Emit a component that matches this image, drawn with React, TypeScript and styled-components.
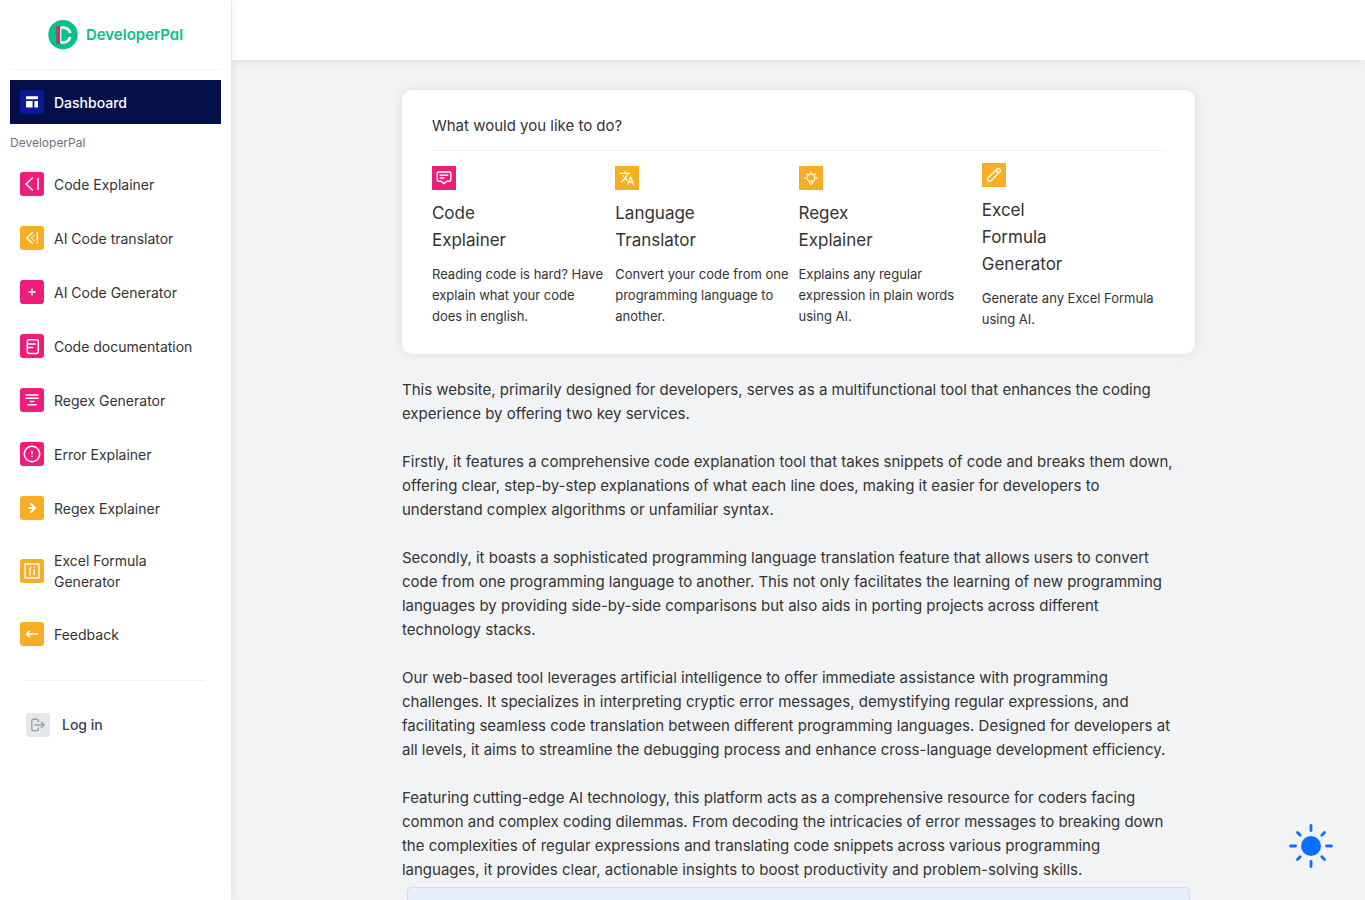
import React from "react";
import styled, { createGlobalStyle } from "styled-components";
import { MdTranslate } from "react-icons/md";

const colors = {
  pink: "#ed1e79",
  amber: "#f7ae24",
  navy: "#040f4a",
  blue: "#0b1a94",
  green: "#06c286",
  text: "#333333",
};

const GlobalStyle = createGlobalStyle`
  * { box-sizing: border-box; }
  body {
    margin: 0;
    background: #f2f3f5;
    color: ${colors.text};
    font-family: Inter, "Liberation Sans", sans-serif;
    font-size: 15px;
    line-height: 24px;
  }
  a { color: inherit; text-decoration: none; }
  h1, h2, p, ul { margin: 0; padding: 0; font-weight: 400; }
`;

const Shell = styled.div`
  display: grid;
  grid-template-columns: 231px minmax(0, 1fr);
  column-gap: 1px;
  height: 100vh;
`;

const Sidebar = styled.aside`
  position: relative;
  z-index: 2;
  padding: 0 10px;
  background: #fff;
  box-shadow: 0 0 10px rgba(0, 0, 0, 0.1);
`;

const Brand = styled.a`
  display: flex;
  align-items: center;
  justify-content: center;
  gap: 8px;
  height: 70px;
  border-bottom: 1px solid #f2f3f4;
  color: ${colors.green};
  font-size: 15px;
  font-weight: 600;
  font-feature-settings: "cv11";
`;

const NavList = styled.ul`
  display: flex;
  flex-direction: column;
  gap: 10px;
  margin-top: 10px;
  list-style: none;
`;

const NavLink = styled.a<{ $active?: boolean }>`
  display: flex;
  align-items: center;
  gap: 10px;
  padding: 10px;
  background: ${(p) => (p.$active ? colors.navy : "transparent")};
  color: ${(p) => (p.$active ? "#fff" : colors.text)};
  font-size: 14px;
  font-weight: ${(p) => (p.$active ? 500 : 400)};
  line-height: 21px;
`;

const NavLabel = styled.li`
  color: #6b7280;
  font-size: 12px;
  line-height: 18px;
`;

const IconTile = styled.span<{ $bg: string; $radius?: number; $color?: string }>`
  display: flex;
  flex: none;
  align-items: center;
  justify-content: center;
  width: 24px;
  height: 24px;
  border-radius: ${(p) => p.$radius ?? 0}px;
  background: ${(p) => p.$bg};
  color: ${(p) => p.$color ?? "#fff"};
`;

const Account = styled.div`
  margin: 24px 16px 0;
  padding-top: 32px;
  border-top: 1px solid #f0f1f2;
`;

const LoginLink = styled.a`
  display: flex;
  align-items: center;
  gap: 12px;
  color: #374151;
  font-size: 14px;
  font-weight: 500;
`;

const Main = styled.main`
  overflow-y: auto;
  scrollbar-width: none;
`;

const TopBar = styled.header`
  height: 60px;
  background: #fff;
  box-shadow: 0 0 10px rgba(0, 0, 0, 0.1);
`;

const Content = styled.div`
  width: 70%;
  margin: 30px auto;
`;

const Card = styled.section`
  padding: 24px 30px;
  border-radius: 10px;
  background: #fff;
  box-shadow: 0 0 10px rgba(0, 0, 0, 0.1);
`;

const CardTitle = styled.h1`
  padding-bottom: 12px;
  border-bottom: 1px solid #f0f1f2;
  font-size: 15px;
`;

const ToolGrid = styled.div`
  display: grid;
  grid-template-columns: repeat(4, minmax(0, 1fr));
  align-items: center;
  margin-top: 12px;
`;

const Tool = styled.a`
  display: flex;
  flex-direction: column;
  gap: 10px;
`;

const ToolName = styled.h2`
  width: min-content;
  font-size: 17px;
  line-height: 27px;
`;

const ToolText = styled.p`
  font-size: 13px;
  line-height: 21px;
  white-space: pre-line;
`;

const Article = styled.article`
  display: flex;
  flex-direction: column;
  gap: 24px;
  margin-top: 24px;
  padding-right: 18px;
`;

const Banner = styled.div`
  height: 90px;
  margin: 5px;
  border: 1px solid #d9dde3;
  border-radius: 4px;
  background: #e7effd;
`;

const ThemeButton = styled.button`
  position: fixed;
  right: 32px;
  bottom: 32px;
  z-index: 3;
  display: flex;
  padding: 0;
  border: 0;
  background: none;
  color: #0d6efd;
  cursor: pointer;
`;

const Glyph = ({ children, width = 1.5 }: { children: React.ReactNode; width?: number }) => (
  <svg width="24" height="24" viewBox="0 0 24 24" fill="none" stroke="currentColor" strokeWidth={width} strokeLinecap="round" strokeLinejoin="round" aria-hidden="true">
    {children}
  </svg>
);

const DashboardIcon = () => (
  <Glyph width={0}>
    <g fill="currentColor">
      <rect x="6" y="6.3" width="12" height="3" rx=".5" />
      <rect x="6" y="11" width="6.6" height="6.6" rx=".5" />
      <rect x="14.4" y="11" width="3.6" height="6.6" rx=".5" />
    </g>
  </Glyph>
);

const LogoMark = () => (
  <svg width="30" height="30" viewBox="0 0 30 30" fill="none" aria-hidden="true">
    <circle cx="15" cy="14.7" r="14.7" fill={colors.green} />
    <path d="M13.2 7.4c4.8-.2 8 1.8 9 5.6M22.2 17c-1 3.8-4.2 5.8-9 5.6" stroke="#fff" strokeWidth="2.8" />
    <path d="M12.8 7v16" stroke="#fff" strokeWidth="1.2" />
    <rect x="8.4" y="6" width="3.6" height="17.8" fill="#d9296b" />
  </svg>
);

const navItems = [
  { label: "Code Explainer", bg: colors.pink, icon: <Glyph><path d="M12.4 6 6 12l6.4 6M18 6.6v10.8" /></Glyph> },
  { label: "AI Code translator", bg: colors.amber, icon: <Glyph><path d="M12.3 6.8 6.6 12l5.7 5.2M17.4 6.8v10.4" /><path d="M14.4 9.2 11.2 12l3.2 2.8" strokeWidth="1.1" opacity=".65" /></Glyph> },
  { label: "AI Code Generator", bg: colors.pink, icon: <Glyph><path d="M12 8.9v6.2M8.9 12h6.2" /></Glyph> },
  { label: "Code documentation", bg: colors.pink, icon: <Glyph><path d="M9 5.8h7.6a1.7 1.7 0 0 1 1.7 1.7v10.1a1.9 1.9 0 0 1-1.9 1.9H9.2a1.9 1.9 0 0 1-1.9-1.9V7.5A1.7 1.7 0 0 1 9 5.8ZM7.5 10h7.8M7.5 13.4h5.2" /></Glyph> },
  { label: "Regex Generator", bg: colors.pink, icon: <Glyph><path d="M5.9 7.1h12.2M5.9 10.2h12.2M10.2 13.6h3.6M7.8 16.7h8.4" /></Glyph> },
  { label: "Error Explainer", bg: colors.pink, icon: <Glyph><circle cx="12" cy="12" r="7.7" /><path d="M12 9.6v2.2M12 14.3v.1" /></Glyph> },
  { label: "Regex Explainer", bg: colors.amber, icon: <Glyph width={1.9}><path d="M9 12h6M11 8l4.2 4-4.2 4" /></Glyph> },
  { label: "Excel Formula Generator", bg: colors.amber, icon: <Glyph width={1.4}><path d="M5 5h14v14H5ZM14.2 10.8v5M14.2 8v.3M10 16v-4.6M9.6 10.6l1.2-2.4" /></Glyph> },
  { label: "Feedback", bg: colors.amber, icon: <Glyph width={1.7}><path d="M6.8 12h10.6M9.4 9.1 6.6 12l2.8 2.9" /></Glyph> },
];

const tools = [
  {
    name: "Code Explainer",
    text: "Reading code is hard? Have\nexplain what your code\ndoes in english.",
    bg: colors.pink,
    icon: <Glyph width={1.4}><path d="M6.7 6h10.6a1.5 1.5 0 0 1 1.5 1.5v6.2a1.5 1.5 0 0 1-1.5 1.5h-2.5L12 17.6l-2.8-2.4H6.7a1.5 1.5 0 0 1-1.5-1.5V7.5A1.5 1.5 0 0 1 6.7 6ZM8.2 9.2h7.6M8.2 12h3.6" /></Glyph>,
  },
  {
    name: "Language Translator",
    text: "Convert your code from one\nprogramming language to\nanother.",
    bg: colors.amber,
    icon: <MdTranslate size={16} aria-hidden="true" />,
  },
  {
    name: "Regex Explainer",
    text: "Explains any regular\nexpression in plain words\nusing AI.",
    bg: colors.amber,
    icon: <Glyph width={1.3}><path d="M10.5 15.4a3.9 3.9 0 1 1 3 0v1.3a1.5 1.5 0 0 1-3 0ZM10.6 15.4h2.8M12 5.7v.6M5.8 12h.7M17.5 12h.7M7.6 7.6l.5.5M16.4 7.6l-.5.5" /></Glyph>,
  },
  {
    name: "Excel Formula Generator",
    text: "Generate any Excel Formula\nusing AI.",
    bg: colors.amber,
    icon: <Glyph width={1.4}><path d="M14.8 6.2a2 2 0 0 1 2.9 2.9l-8.6 8.6a2 2 0 0 1-2.9-2.9ZM13.8 7.4l2.7 2.7" /></Glyph>,
  },
];

const paragraphs = [
  "This website, primarily designed for developers, serves as a multifunctional tool that enhances the coding experience by offering two key services.",
  "Firstly, it features a comprehensive code explanation tool that takes snippets of code and breaks them down, offering clear, step-by-step explanations of what each line does, making it easier for developers to understand complex algorithms or unfamiliar syntax.",
  "Secondly, it boasts a sophisticated programming language translation feature that allows users to convert code from one programming language to another. This not only facilitates the learning of new programming languages by providing side-by-side comparisons but also aids in porting projects across different technology stacks.",
  "Our web-based tool leverages artificial intelligence to offer immediate assistance with programming challenges. It specializes in interpreting cryptic error messages, demystifying regular expressions, and facilitating seamless code translation between different programming languages. Designed for developers at all levels, it aims to streamline the debugging process and enhance cross-language development efficiency.",
  "Featuring cutting-edge AI technology, this platform acts as a comprehensive resource for coders facing common and complex coding dilemmas. From decoding the intricacies of error messages to breaking down the complexities of regular expressions and translating code snippets across various programming languages, it provides clear, actionable insights to boost productivity and problem-solving skills.",
];

export default function App() {
  return (
    <>
      <GlobalStyle />
      <Shell>
        <Sidebar>
          <Brand href="#">
            <LogoMark />
            DeveloperPal
          </Brand>
          <nav>
            <NavList>
              <li>
                <NavLink href="#" $active>
                  <IconTile $bg={colors.blue} $radius={3}><DashboardIcon /></IconTile>
                  Dashboard
                </NavLink>
              </li>
              <NavLabel>DeveloperPal</NavLabel>
              {navItems.map((item) => (
                <li key={item.label}>
                  <NavLink href="#">
                    <IconTile $bg={item.bg} $radius={3}>{item.icon}</IconTile>
                    {item.label}
                  </NavLink>
                </li>
              ))}
            </NavList>
          </nav>
          <Account>
            <LoginLink href="#">
              <IconTile $bg="#e5e7eb" $radius={2} $color="#9ca3af">
                <Glyph>
                  <path d="M12.4 8.8V8a1.7 1.7 0 0 0-1.7-1.7H7.5A1.7 1.7 0 0 0 5.8 8v8a1.7 1.7 0 0 0 1.7 1.7h3.2a1.7 1.7 0 0 0 1.7-1.7v-.8M8.8 12h9M15.4 9.3l2.7 2.7-2.7 2.7" />
                </Glyph>
              </IconTile>
              Log in
            </LoginLink>
          </Account>
        </Sidebar>
        <Main>
          <TopBar />
          <Content>
            <Card>
              <CardTitle>What would you like to do?</CardTitle>
              <ToolGrid>
                {tools.map((tool) => (
                  <Tool href="#" key={tool.name}>
                    <IconTile $bg={tool.bg}>{tool.icon}</IconTile>
                    <ToolName>{tool.name}</ToolName>
                    <ToolText>{tool.text}</ToolText>
                  </Tool>
                ))}
              </ToolGrid>
            </Card>
            <Article>
              {paragraphs.map((text) => (
                <p key={text}>{text}</p>
              ))}
            </Article>
            <Banner />
          </Content>
        </Main>
      </Shell>
      <ThemeButton type="button" aria-label="Toggle theme">
        <svg width="44" height="44" viewBox="0 0 44 44" fill="none" stroke="currentColor" strokeWidth="2.8" strokeLinecap="round" aria-hidden="true">
          <circle cx="22" cy="22" r="10" fill="currentColor" stroke="none" />
          <path d="M22 1.5v5M22 37.5v5M1.5 22h5M37.5 22h5M8.5 8.5l2.7 2.7M32.8 32.8l2.7 2.7M35.5 8.5l-2.7 2.7M11.2 32.8l-2.7 2.7" />
        </svg>
      </ThemeButton>
    </>
  );
}
